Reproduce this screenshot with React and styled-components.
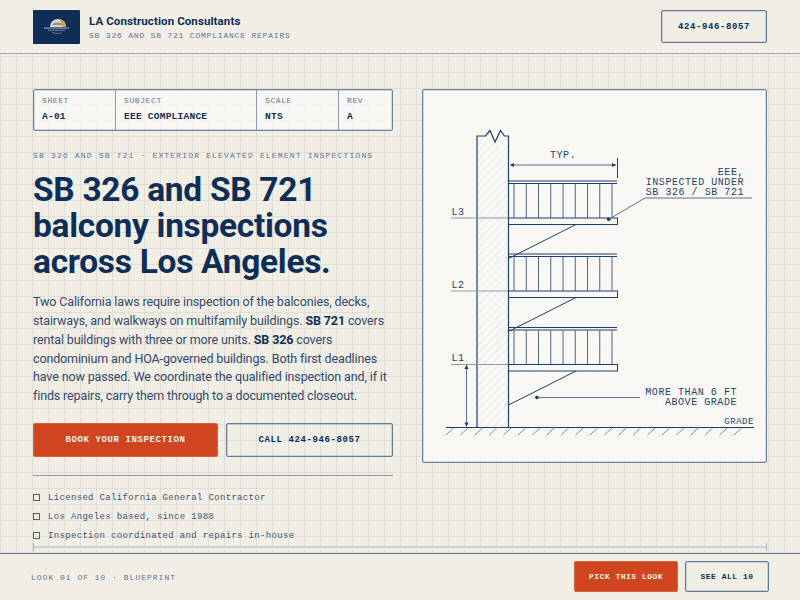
import React from "react";
import styled, { createGlobalStyle } from "styled-components";

const NAVY = "#0f2e57";
const LINE = "#1f3f6b";
const MONO = `"Liberation Mono", "DejaVu Sans Mono", monospace`;
const SANS = `Roboto, "Noto Sans", "Liberation Sans", sans-serif`;

const Global = createGlobalStyle`
  html, body { margin: 0; padding: 0; height: 100%; overflow: hidden; }
  body { background: #f1eee6; font-family: ${SANS}; color: ${NAVY}; }
  * { box-sizing: border-box; }
`;

const Page = styled.div`
  height: 100vh;
  display: flex;
  flex-direction: column;
  overflow: hidden;
`;

const Header = styled.header`
  height: 54px;
  flex: none;
  display: flex;
  align-items: flex-start;
  justify-content: space-between;
  padding: 10px 33px 0;
  border-bottom: 1px solid #9aa6b6;
  background: #f1eee6;
`;

const Brand = styled.div`
  display: flex;
  align-items: flex-start;
  gap: 9px;
`;

const Logo = styled.svg`
  display: block;
  width: 47px;
  height: 34px;
  border-radius: 1px;
`;

const BrandText = styled.div`
  padding-top: 4px;
`;

const BrandName = styled.div`
  font-size: 11.5px;
  font-weight: 700;
  line-height: 14px;
  letter-spacing: 0.1px;
  color: ${NAVY};
`;

const BrandSub = styled.div`
  margin-top: 3px;
  font-family: ${MONO};
  font-size: 8px;
  line-height: 10px;
  letter-spacing: 0.8px;
  color: #5f7391;
`;

const Button = styled.a`
  display: flex;
  align-items: center;
  justify-content: center;
  font-family: ${MONO};
  font-weight: 700;
  border-radius: 2px;
  white-space: nowrap;
  font-size: ${(p) => (p.$small ? "8px" : "9px")};
  letter-spacing: ${(p) => (p.$small ? "0.5px" : "0.6px")};
  width: ${(p) => p.$w}px;
  height: ${(p) => p.$h}px;
  background: ${(p) => (p.$primary ? "#cf451f" : "transparent")};
  color: ${(p) => (p.$primary ? "#fbf3ea" : NAVY)};
  border: ${(p) => (p.$primary ? "1px solid #d8623f" : "1px solid #64789a")};
  box-shadow: ${(p) => (p.$primary ? "none" : "inset 0 0 0 1px rgba(125, 142, 168, 0.3)")};
`;

const Main = styled.main`
  flex: 1;
  min-height: 0;
  overflow: hidden;
  display: grid;
  grid-template-columns: 360px 345px;
  column-gap: 29px;
  align-items: start;
  padding: 35px 33px 0;
  background-color: #f1eee6;
  background-image: linear-gradient(#e0dfd7 1px, transparent 1px),
    linear-gradient(90deg, #e0dfd7 1px, transparent 1px);
  background-size: 16px 16px;
  background-position: 0 2px;
`;

const Column = styled.div`
  display: flex;
  flex-direction: column;
`;

const SheetTable = styled.div`
  display: grid;
  grid-template-columns: 81px 141px 82px 1fr;
  height: 42px;
  background: rgba(250, 249, 246, 0.82);
  border: 1px solid #6d80a0;
  box-shadow: inset 0 0 0 1px rgba(125, 142, 168, 0.3);
  border-radius: 2px;
`;

const SheetCell = styled.div`
  padding: 6px 0 0 8px;
  border-left: ${(p) => (p.$first ? "none" : "1px solid #8b9ab0")};
`;

const SheetLabel = styled.div`
  font-family: ${MONO};
  font-size: 8px;
  line-height: 10px;
  letter-spacing: 0.6px;
  color: #5f7391;
`;

const SheetValue = styled.div`
  margin-top: 5px;
  font-family: ${MONO};
  font-size: 9.5px;
  font-weight: 700;
  line-height: 12px;
  letter-spacing: 0.25px;
  color: ${NAVY};
`;

const Eyebrow = styled.div`
  margin-top: 20px;
  font-family: ${MONO};
  font-size: 8px;
  line-height: 10px;
  letter-spacing: 1.17px;
  color: #5f7391;
  white-space: nowrap;
`;

const Title = styled.h1`
  margin: 11px 0 0;
  font-size: 33.5px;
  font-weight: 700;
  line-height: 36px;
  letter-spacing: -0.3px;
  color: ${NAVY};
  white-space: nowrap;
`;

const Lead = styled.p`
  margin: 13px 0 0;
  font-size: 12.5px;
  line-height: 18.85px;
  letter-spacing: -0.13px;
  color: #33496b;
  white-space: nowrap;
  b {
    color: ${NAVY};
    font-weight: 700;
  }
`;

const Actions = styled.div`
  margin-top: 17px;
  display: flex;
  justify-content: space-between;
`;

const Rule = styled.div`
  margin-top: 18px;
  height: 1px;
  background: #8b9ab0;
`;

const Checks = styled.ul`
  list-style: none;
  margin: 16px 0 0;
  padding: 0;
  display: flex;
  flex-direction: column;
  gap: 8px;
`;

const Check = styled.li`
  display: flex;
  align-items: center;
  gap: 8px;
  height: 11px;
  font-family: ${MONO};
  font-size: 9px;
  letter-spacing: 0.33px;
  color: #3f5470;
`;

const CheckBox = styled.span`
  width: 7px;
  height: 7px;
  flex: none;
  border: 1px solid #4d6280;
`;

const DrawingPanel = styled.div`
  height: 374px;
  background: rgba(250, 249, 246, 0.86);
  border: 1px solid #6d80a0;
  box-shadow: inset 0 0 0 1px rgba(125, 142, 168, 0.3);
  border-radius: 2px;
  overflow: hidden;
`;

const Drawing = styled.svg`
  display: block;
  margin: -1px;
  width: 345px;
  height: 374px;
`;

const DimText = styled.text`
  font-family: ${MONO};
  font-size: ${(p) => p.$size || 10}px;
  letter-spacing: ${(p) => p.$ls || 0.55}px;
  fill: ${LINE};
`;

const SpanLine = styled.div`
  position: absolute;
  left: 33px;
  right: 33px;
  top: 543px;
  height: 8px;
  border-left: 1px solid #a6aeb8;
  border-right: 1px solid #a6aeb8;
  &::before {
    content: "";
    display: block;
    margin-top: 3px;
    height: 2px;
    background: #cdd0d0;
  }
`;

const Footer = styled.footer`
  position: relative;
  height: 47px;
  flex: none;
  display: flex;
  align-items: flex-start;
  justify-content: space-between;
  padding: 7px 31px 0;
  border-top: 1px solid #5f7595;
  background: #f1eee6;
`;

const FooterNote = styled.div`
  margin-top: 12px;
  font-family: ${MONO};
  font-size: 8px;
  line-height: 10px;
  letter-spacing: 1px;
  color: #5f7391;
`;

const FooterActions = styled.div`
  display: flex;
  gap: 7px;
`;

const BALUSTERS = Array.from({ length: 9 }, (_, i) => 514 + i * 12.25);
const LEVELS = [
  { name: "L3", y: 218 },
  { name: "L2", y: 291 },
  { name: "L1", y: 364.5 },
];

// page coordinates are easier to read off the sheet, so shift by the panel origin
const BlueprintDrawing = () => (
  <Drawing viewBox="422 89 345 374" fill="none">
    <defs>
      <pattern id="hatch" width="5.7" height="8" patternUnits="userSpaceOnUse" patternTransform="rotate(45)">
        <line x1="0" y1="0" x2="0" y2="8" stroke="#d9dadb" strokeWidth="1" />
      </pattern>
    </defs>
    <rect x="477" y="136" width="31.5" height="292" fill="url(#hatch)" />
    <path d="M477 428V136H485.5L490 130.5L495 142L500.5 130.5L504.5 136H508.5V428" stroke={LINE} strokeWidth="1.2" />
    {LEVELS.map((l) => (
      <g key={l.name}>
        <line x1="451" y1={l.y} x2="508" y2={l.y} stroke="#8d9bb0" strokeWidth="1" />
        <DimText x="451.5" y={l.y - 3.5}>{l.name}</DimText>
        <rect x="508.5" y={l.y} width="109" height="6.5" stroke={LINE} strokeWidth="1" />
        <line x1="508" y1={l.y - 37} x2="617" y2={l.y - 37} stroke={LINE} strokeWidth="1" />
        <line x1="508" y1={l.y - 34.5} x2="617" y2={l.y - 34.5} stroke={LINE} strokeWidth="1" />
        {BALUSTERS.map((x) => (
          <line key={x} x1={x} y1={l.y - 34} x2={x} y2={l.y} stroke={LINE} strokeOpacity="0.8" strokeWidth="1" />
        ))}
        <line x1="508.5" y1={l.y + 40.5} x2="576" y2={l.y + 6.5} stroke={LINE} strokeWidth="1" />
      </g>
    ))}
    <line x1="510" y1="165" x2="616" y2="165" stroke="#5c7291" strokeWidth="1" />
    <path d="M510 165L514 163V167Z M616 165L612 163V167Z" fill={LINE} />
    <line x1="617.5" y1="158" x2="617.5" y2="178" stroke={LINE} strokeWidth="1" />
    <DimText x="550" y="158">TYP.</DimText>

    <circle cx="608.7" cy="219.3" r="1.8" fill={NAVY} />
    <path d="M608.7 219.3L645 198H752" stroke="#5c7291" strokeWidth="1" />
    <DimText x="744" y="175" textAnchor="end">EEE,</DimText>
    <DimText x="744" y="185" textAnchor="end">INSPECTED UNDER</DimText>
    <DimText x="744" y="195" textAnchor="end">SB 326 / SB 721</DimText>

    <circle cx="537" cy="397.5" r="1.8" fill={NAVY} />
    <line x1="537" y1="397.5" x2="640" y2="397.5" stroke="#5c7291" strokeWidth="1" />
    <DimText x="737" y="395" textAnchor="end">MORE THAN 6 FT</DimText>
    <DimText x="737" y="405" textAnchor="end">ABOVE GRADE</DimText>

    <line x1="466.5" y1="367" x2="466.5" y2="425" stroke="#5c7291" strokeWidth="1" />
    <path d="M466.5 364.5L468.5 369H464.5Z M466.5 427L468.5 422.5H464.5Z" fill={LINE} />

    <line x1="446" y1="427.5" x2="754" y2="427.5" stroke={LINE} strokeWidth="1.2" />
    {Array.from({ length: 21 }, (_, i) => (
      <line key={i} x1={446 + i * 14.4} y1="435" x2={453.5 + i * 14.4} y2="428" stroke="#7c8ca3" strokeWidth="1" />
    ))}
    <DimText x="754" y="424" textAnchor="end" $size={9}>GRADE</DimText>
  </Drawing>
);

const App = () => (
  <Page>
    <Global />
    <Header>
      <Brand>
        <Logo viewBox="0 0 47 34">
          <rect width="47" height="34" fill="#0f2e57" />
          <path d="M17 17a8 8 0 0 1 16 0Z" fill="#d9d6cc" />
          <path d="M27 9.3a8 8 0 0 1 6 7.7h-3.5Z" fill="#c9a445" />
          <path d="M19 15a6 4 0 0 1 11 0Z" fill="#8f8f8c" />
          <rect x="11" y="17.5" width="25" height="1.2" fill="#8d9db3" />
          <rect x="15" y="19.8" width="17" height="1" fill="#6f84a1" />
          <path d="M19 22a6 3 0 0 0 6 1.5" stroke="#4f9a63" strokeWidth="1" fill="none" />
          <path d="M25 23.5a6 3 0 0 0 4-1.5" stroke="#b8492f" strokeWidth="1" fill="none" />
        </Logo>
        <BrandText>
          <BrandName>LA Construction Consultants</BrandName>
          <BrandSub>SB 326 AND SB 721 COMPLIANCE REPAIRS</BrandSub>
        </BrandText>
      </Brand>
      <Button $w={106} $h={33}>424-946-8057</Button>
    </Header>
    <Main>
      <Column>
        <SheetTable>
          <SheetCell $first>
            <SheetLabel>SHEET</SheetLabel>
            <SheetValue>A-01</SheetValue>
          </SheetCell>
          <SheetCell>
            <SheetLabel>SUBJECT</SheetLabel>
            <SheetValue>EEE COMPLIANCE</SheetValue>
          </SheetCell>
          <SheetCell>
            <SheetLabel>SCALE</SheetLabel>
            <SheetValue>NTS</SheetValue>
          </SheetCell>
          <SheetCell>
            <SheetLabel>REV</SheetLabel>
            <SheetValue>A</SheetValue>
          </SheetCell>
        </SheetTable>
        <Eyebrow>SB 326 AND SB 721 · EXTERIOR ELEVATED ELEMENT INSPECTIONS</Eyebrow>
        <Title>
          SB 326 and SB 721
          <br />
          balcony inspections
          <br />
          across Los Angeles.
        </Title>
        <Lead>
          Two California laws require inspection of the balconies, decks,
          <br />
          stairways, and walkways on multifamily buildings. <b>SB 721</b> covers
          <br />
          rental buildings with three or more units. <b>SB 326</b> covers
          <br />
          condominium and HOA-governed buildings. Both first deadlines
          <br />
          have now passed. We coordinate the qualified inspection and, if it
          <br />
          finds repairs, carry them through to a documented closeout.
        </Lead>
        <Actions>
          <Button $primary $w={185} $h={34}>BOOK YOUR INSPECTION</Button>
          <Button $w={167} $h={34}>CALL 424-946-8057</Button>
        </Actions>
        <Rule />
        <Checks>
          <Check><CheckBox />Licensed California General Contractor</Check>
          <Check><CheckBox />Los Angeles based, since 1988</Check>
          <Check><CheckBox />Inspection coordinated and repairs in-house</Check>
        </Checks>
      </Column>
      <DrawingPanel>
        <BlueprintDrawing />
      </DrawingPanel>
    </Main>
    <SpanLine />
    <Footer>
      <FooterNote>LOOK 01 OF 10 · BLUEPRINT</FooterNote>
      <FooterActions>
        <Button $primary $small $w={104} $h={31}>PICK THIS LOOK</Button>
        <Button $small $w={84} $h={31}>SEE ALL 10</Button>
      </FooterActions>
    </Footer>
  </Page>
);

export default App;
